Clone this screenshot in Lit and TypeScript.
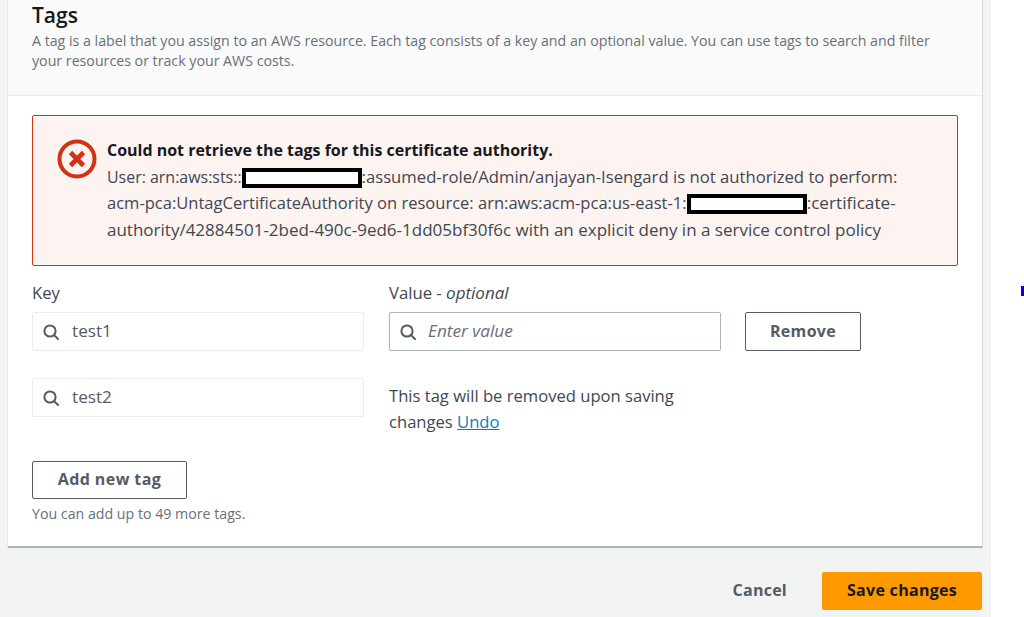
import { LitElement, html, css } from "lit";
import { customElement } from "lit/decorators.js";

const search = html`<svg class="ico" width="16" height="16" viewBox="0 0 16 16" fill="none" stroke="#545b64" stroke-width="2"><circle cx="7" cy="7" r="5.6"/><path d="M11 11l4 4" stroke-linecap="round"/></svg>`;

@customElement("app-root")
export class AppRoot extends LitElement {
  static styles = css`
    :host { display: block; width: 1024px; height: 617px; background: #fff; position: relative; overflow: hidden;
      font-family: "Open Sans", "Noto Sans", sans-serif; font-size: 16px; color: #16191f; }
    .page { width: 991px; height: 617px; box-sizing: border-box; background: #f2f3f3; padding: 0 8px; display: flex; flex-direction: column; }
    .card { width: 975px; height: 548px; box-sizing: border-box; background: #fff; border-right: 1px solid #d5dbdb; border-bottom: 2px solid #aab7b8; box-shadow: -1px 0 0 #e4e8e8; }
    .head { height: 96px; box-sizing: border-box; background: #fafafa; border-bottom: 1px solid #eaeded; padding: 1px 24px 0; }
    h2 { margin: 0; font-size: 21px; line-height: 29px; font-weight: 600; color: #16191f; }
    .desc { font-size: 14.2px; line-height: 20px; color: #687078; margin-top: 1px; width: 915px; }
    .body { padding: 19px 24px 0 24px; }
    .alert { width: 926px; height: 151px; box-sizing: border-box; background: #fdf3f1; border: 1px solid #d13212; border-radius: 2px; display: flex; padding: 21px 20px 0 24px; gap: 10px; }
    .alert svg { flex: none; margin-top: 2px; }
    .msg { line-height: 26.5px; color: #414750; white-space: nowrap; font-size: 16.55px; }
    .msg b { color: #16191f; font-weight: 700; display: block; font-size: 15.97px; }
    .lead { font-size: 15.95px; }
    .rest { font-size: 16.68px; }
    .tail { font-size: 17.2px; }
    .wide { font-size: 17px; }
    .red { display: inline-block; box-sizing: border-box; width: 120px; height: 20px; border: 4px solid #000; background: #fff; vertical-align: -5px; }
    .rows { margin-top: 16px; display: grid; grid-template-columns: 357px 356px 116px; row-gap: 27px; }
    .lab { line-height: 22px; height: 30px; color: #414750; font-size: 16.7px; }
    .lab i { font-style: italic; font-size: 17px; }
    .input { width: 332px; height: 39px; box-sizing: border-box; display: flex; align-items: center; gap: 13px; padding: 0 0 2px 10px; border: 1px solid #aab7b8; border-radius: 2px; background: #fff; color: #545b64; font-size: 17.2px; }
    .input.off { border-color: #eaeded; }
    .input.ph { color: #687078; font-style: italic; gap: 12px; }
    .ico { flex: none; margin-top: 2px; }
    .btn { box-sizing: border-box; height: 39px; display: flex; align-items: center; justify-content: center; padding-bottom: 2px; border: 1px solid #545b64; border-radius: 2px; background: #fff; color: #545b64; font-weight: 700; letter-spacing: .3px; }
    .note { line-height: 26px; color: #414750; margin-top: 5px; font-size: 16.6px; }
    a { color: #0a7ec2; text-decoration: underline; }
    .add { width: 155px; height: 38px; margin-top: 26px; letter-spacing: .4px; }
    .hint { font-size: 14.2px; line-height: 20px; color: #687078; margin-top: 5px; }
    .foot { display: flex; justify-content: flex-end; align-items: center; margin-top: 24px; padding-right: 1px; }
    .cancel { color: #545b64; font-weight: 700; margin-right: 35px; letter-spacing: .25px; padding-bottom: 2px; }
    .save { width: 160px; height: 38px; display: flex; align-items: center; justify-content: center; padding-bottom: 2px; box-sizing: border-box; background: #ff9900; border-radius: 2px; font-weight: 700; color: #16191f; letter-spacing: .3px; }
    .mark { position: absolute; left: 1021px; top: 286px; width: 3px; height: 10px; background: #0000e0; }
  `;

  render() {
    return html`
      <div class="page">
        <div class="card">
          <div class="head">
            <h2>Tags</h2>
            <div class="desc">A tag is a label that you assign to an AWS resource. Each tag consists of a key and an optional value. You can use tags to search and filter your resources or track your AWS costs.</div>
          </div>
          <div class="body">
            <div class="alert">
              <svg width="40" height="40" viewBox="0 0 40 40" fill="none" stroke="#d13212"><circle cx="20" cy="20" r="17.5" stroke-width="4"/><path d="M13.5 13.5l13 13M26.5 13.5l-13 13" stroke-width="4.6"/></svg>
              <div class="msg">
                <b>Could not retrieve the tags for this certificate authority.</b>
                <span class="lead">User: arn:aws:sts::</span><span class="red"></span><span class="rest">:assumed-role/Admin/anjayan-Isengard is not authorized to perform:</span><br>
                acm-pca:UntagCertificateAuthority on resource: arn:aws:acm-pca:us-east-1:<span class="red"></span><span class="tail">:certificate-</span><br>
                <span class="wide">authority/42884501-2bed-490c-9ed6-1dd05bf30f6c with an explicit deny in a service control policy</span>
              </div>
            </div>
            <div class="rows">
              <div>
                <div class="lab">Key</div>
                <div class="input off">${search}test1</div>
              </div>
              <div>
                <div class="lab">Value - <i>optional</i></div>
                <div class="input ph">${search}Enter value</div>
              </div>
              <div>
                <div class="lab"></div>
                <div class="btn">Remove</div>
              </div>
              <div><div class="input off">${search}test2</div></div>
              <div class="note">This tag will be removed upon saving<br>changes <a>Undo</a></div>
              <div></div>
            </div>
            <div class="btn add">Add new tag</div>
            <div class="hint">You can add up to 49 more tags.</div>
          </div>
        </div>
        <div class="foot">
          <div class="cancel">Cancel</div>
          <div class="save">Save changes</div>
        </div>
      </div>
      <div class="mark"></div>
    `;
  }
}
